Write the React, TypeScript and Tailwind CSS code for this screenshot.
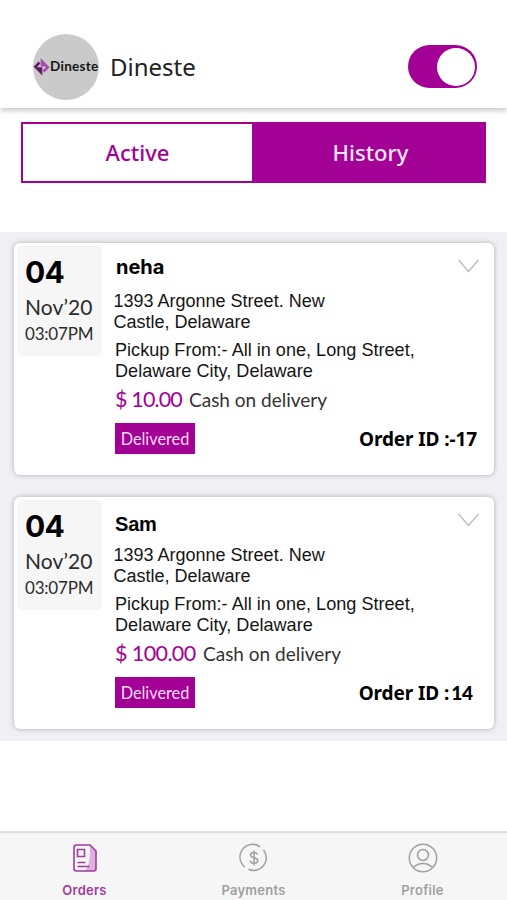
type Order = {
  name: string;
  nameClass: string;
  price: string;
  priceClass: string;
  id: React.ReactNode;
};

const orders: Order[] = [
  {
    name: "neha",
    nameClass: "font-['Inter',sans-serif] text-[20px] pt-[8px] pl-[3px]",
    price: "$ 10.00",
    priceClass: "w-[74px] tracking-[-0.85px]",
    id: <span>Order ID :-17</span>,
  },
  {
    name: "Sam",
    nameClass: "text-[20px] pt-[11px] pl-[2px] tracking-[-0.2px]",
    price: "$ 100.00",
    priceClass: "w-[88px] tracking-[-0.6px]",
    id: (
      <span className="mr-1">
        Order ID :<span className="ml-0.5 font-['Lato',sans-serif] font-black">14</span>
      </span>
    ),
  },
];

const Logo = () => (
  <div className="flex size-[66px] items-center rounded-full bg-[#cacaca]">
    <svg width="17" height="18" viewBox="0 0 17 18" fill="none" className="shrink-0">
      <path d="M6.500 4.500 2.500 8.700 8 14.300V10.500H4.500" stroke="#5d1c66" strokeWidth="2.600" />
      <path d="M10.500 13.500 14.800 9.300 9 3.500V7.300h2.500" stroke="#a64bb0" strokeWidth="2.600" />
    </svg>
    <span className="whitespace-nowrap font-['Lato',sans-serif] text-[13.500px] leading-none font-bold tracking-[0.3px] text-[#151515]">
      Dineste
    </span>
  </div>
);

const Header = () => (
  <header className="flex h-[108px] items-start justify-between pr-[30px] pl-[33px] pt-[33px] shadow-[0_3px_5px_rgba(0,0,0,0.2)]">
    <div className="flex items-center">
      <Logo />
      <h1 className="ml-[11px] text-[24px] leading-[67px] text-[#222]">Dineste</h1>
    </div>
    <div className="mt-[12px] flex h-[43px] w-[69px] items-center justify-end rounded-full bg-[#a30096] pr-[2.5px]">
      <div className="size-[38px] rounded-full bg-white" />
    </div>
  </header>
);

const OrderCard = ({ order }: { order: Order }) => (
  <article className="flex h-[232px] rounded-[6px] bg-white p-[3px] shadow-[0_0_5px_rgba(0,0,0,0.28)]">
    <div className="h-[110px] w-[85px] shrink-0 rounded-[5px] bg-[#f6f6f6] pl-[8px] pt-[9px] font-['Lato',sans-serif] text-[#2b2b2b]">
      <p className="font-['Inter',sans-serif] text-[30px] leading-[34px] font-bold tracking-[-0.8px] text-black">
        04
      </p>
      <p className="whitespace-nowrap pt-[5px] text-[21px] leading-[26px] tracking-[0.1px]">Nov’20</p>
      <p className="whitespace-nowrap pt-px text-[17px] leading-[26px] tracking-[-0.2px]">03:07PM</p>
    </div>
    <div className="flex min-w-0 grow flex-col pr-[13px] pl-[11px] font-['Liberation_Sans',sans-serif] text-[18px] text-[#151515]">
      <div className="flex h-[45px] justify-between">
        <h2 className={`leading-[26px] font-bold text-black ${order.nameClass}`}>{order.name}</h2>
        <svg
          width="21"
          height="14"
          viewBox="0 0 21 14"
          fill="none"
          stroke="#bdbdbd"
          strokeWidth="1.4"
          className="-mr-px mt-[13px]"
        >
          <path d="M.5 1 10.500 12.500 20.500 1" />
        </svg>
      </div>
      <p className="pl-[0.5px] leading-[21px]">
        1393 Argonne Street. New
        <br />
        Castle, Delaware
      </p>
      <p className="mt-[7px] pl-[2px] text-[18.1px] leading-[20.5px]">
        Pickup From:- All in one, Long Street,
        <br />
        Delaware City, Delaware
      </p>
      <p className="flex h-[38px] items-baseline whitespace-nowrap pl-[2px] pt-[3px] font-['Lato',sans-serif] leading-[30px]">
        <span className={`text-[21.500px] text-[#a30096] ${order.priceClass}`}>{order.price}</span>
        <span className="text-[19px] text-[#333]">Cash on delivery</span>
      </p>
      <div className="mt-[4px] flex items-center justify-between">
        <span className="ml-[2px] h-[31px] w-[80px] bg-[#a30096] text-center font-['Lato',sans-serif] text-[16.300px] leading-[31px] text-[#fbdcf8]">
          Delivered
        </span>
        <span className="mr-px whitespace-nowrap pt-px font-['Noto_Sans',sans-serif] text-[19px] tracking-[-0.1px] font-bold text-black">
          {order.id}
        </span>
      </div>
    </div>
  </article>
);

const OrdersIcon = () => (
  <svg width="26" height="30" viewBox="0 0 26 30" fill="none" stroke="#a33aa0" strokeWidth="1.600">
    <path d="M17.500 2.500 24 8v17a3 3 0 0 1-3 3h-8c4-5 6-15 4.500-25.500Z" fill="#dfb0e0" stroke="none" />
    <path d="M4.500 2H18l6 6v17.500a2.500 2.500 0 0 1-2.500 2.500h-17A2.500 2.500 0 0 1 2 25.500v-21A2.500 2.500 0 0 1 4.500 2Z" />
    <path d="M5.500 6.500h7v7h-7zM5.500 19.500h8M5.500 23.500h12" />
  </svg>
);

const PaymentsIcon = () => (
  <svg width="30" height="30" viewBox="0 0 30 30" fill="none" stroke="#a0a0a0" strokeWidth="1.5">
    <path d="M6 24A12.500 12.500 0 0 1 21 3.800M24.500 7A12.500 12.500 0 0 1 9.500 26.200" />
    <path d="M18.500 11.500c-.5-1.500-1.800-2.100-3.500-2.100-2 0-3.400.9-3.400 2.600 0 3.800 7.100 1.900 7.100 5.600 0 1.800-1.600 2.800-3.700 2.800-2.100 0-3.500-.9-3.900-2.700M15 7.500v15" />
  </svg>
);

const ProfileIcon = () => (
  <svg width="30" height="30" viewBox="0 0 30 30" fill="none" stroke="#a0a0a0" strokeWidth="1.500">
    <circle cx="15" cy="15" r="13.700" />
    <circle cx="15" cy="12" r="5.500" />
    <path d="M5.500 24.500c5-5.500 14-5.500 19 0" />
  </svg>
);

const tabs = [
  { label: "Orders", icon: <OrdersIcon />, style: "text-[#a33aa0]" },
  { label: "Payments", icon: <PaymentsIcon />, style: "text-[#a0a0a0]" },
  { label: "Profile", icon: <ProfileIcon />, style: "text-[#a0a0a0]" },
];

const App = () => {
  return (
    <div className="flex h-[900px] w-[507px] flex-col overflow-hidden bg-white font-['Noto_Sans',sans-serif]">
      <Header />
      <div className="mx-[21px] mt-[14px] flex h-[61px] border-[2.5px] border-[#a30096] text-[22px] leading-[57px] font-medium">
        <button className="w-[229px] text-[#a30096]">Active</button>
        <button className="grow bg-[#a30096] pl-[5px] text-[#fbe6f9]">History</button>
      </div>

      <main className="mt-[49px] flex h-[509px] flex-col gap-[22px] bg-[#efeff4] pt-[11px] pr-[13px] pl-[14px]">
        {orders.map((order) => (
          <OrderCard key={order.name} order={order} />
        ))}
      </main>

      <nav className="mt-auto flex h-[69px] justify-between border-t-2 border-[#dedede] bg-[#f6f6f6]">
        {tabs.map((tab) => (
          <div key={tab.label} className={`flex w-[169px] flex-col items-center pt-[10px] ${tab.style}`}>
            {tab.icon}
            <span className="mt-[8px] font-['Inter',sans-serif] text-[13px] leading-[18px] font-semibold tracking-[0.25px]">
              {tab.label}
            </span>
          </div>
        ))}
      </nav>
    </div>
  );
};

export default App;
